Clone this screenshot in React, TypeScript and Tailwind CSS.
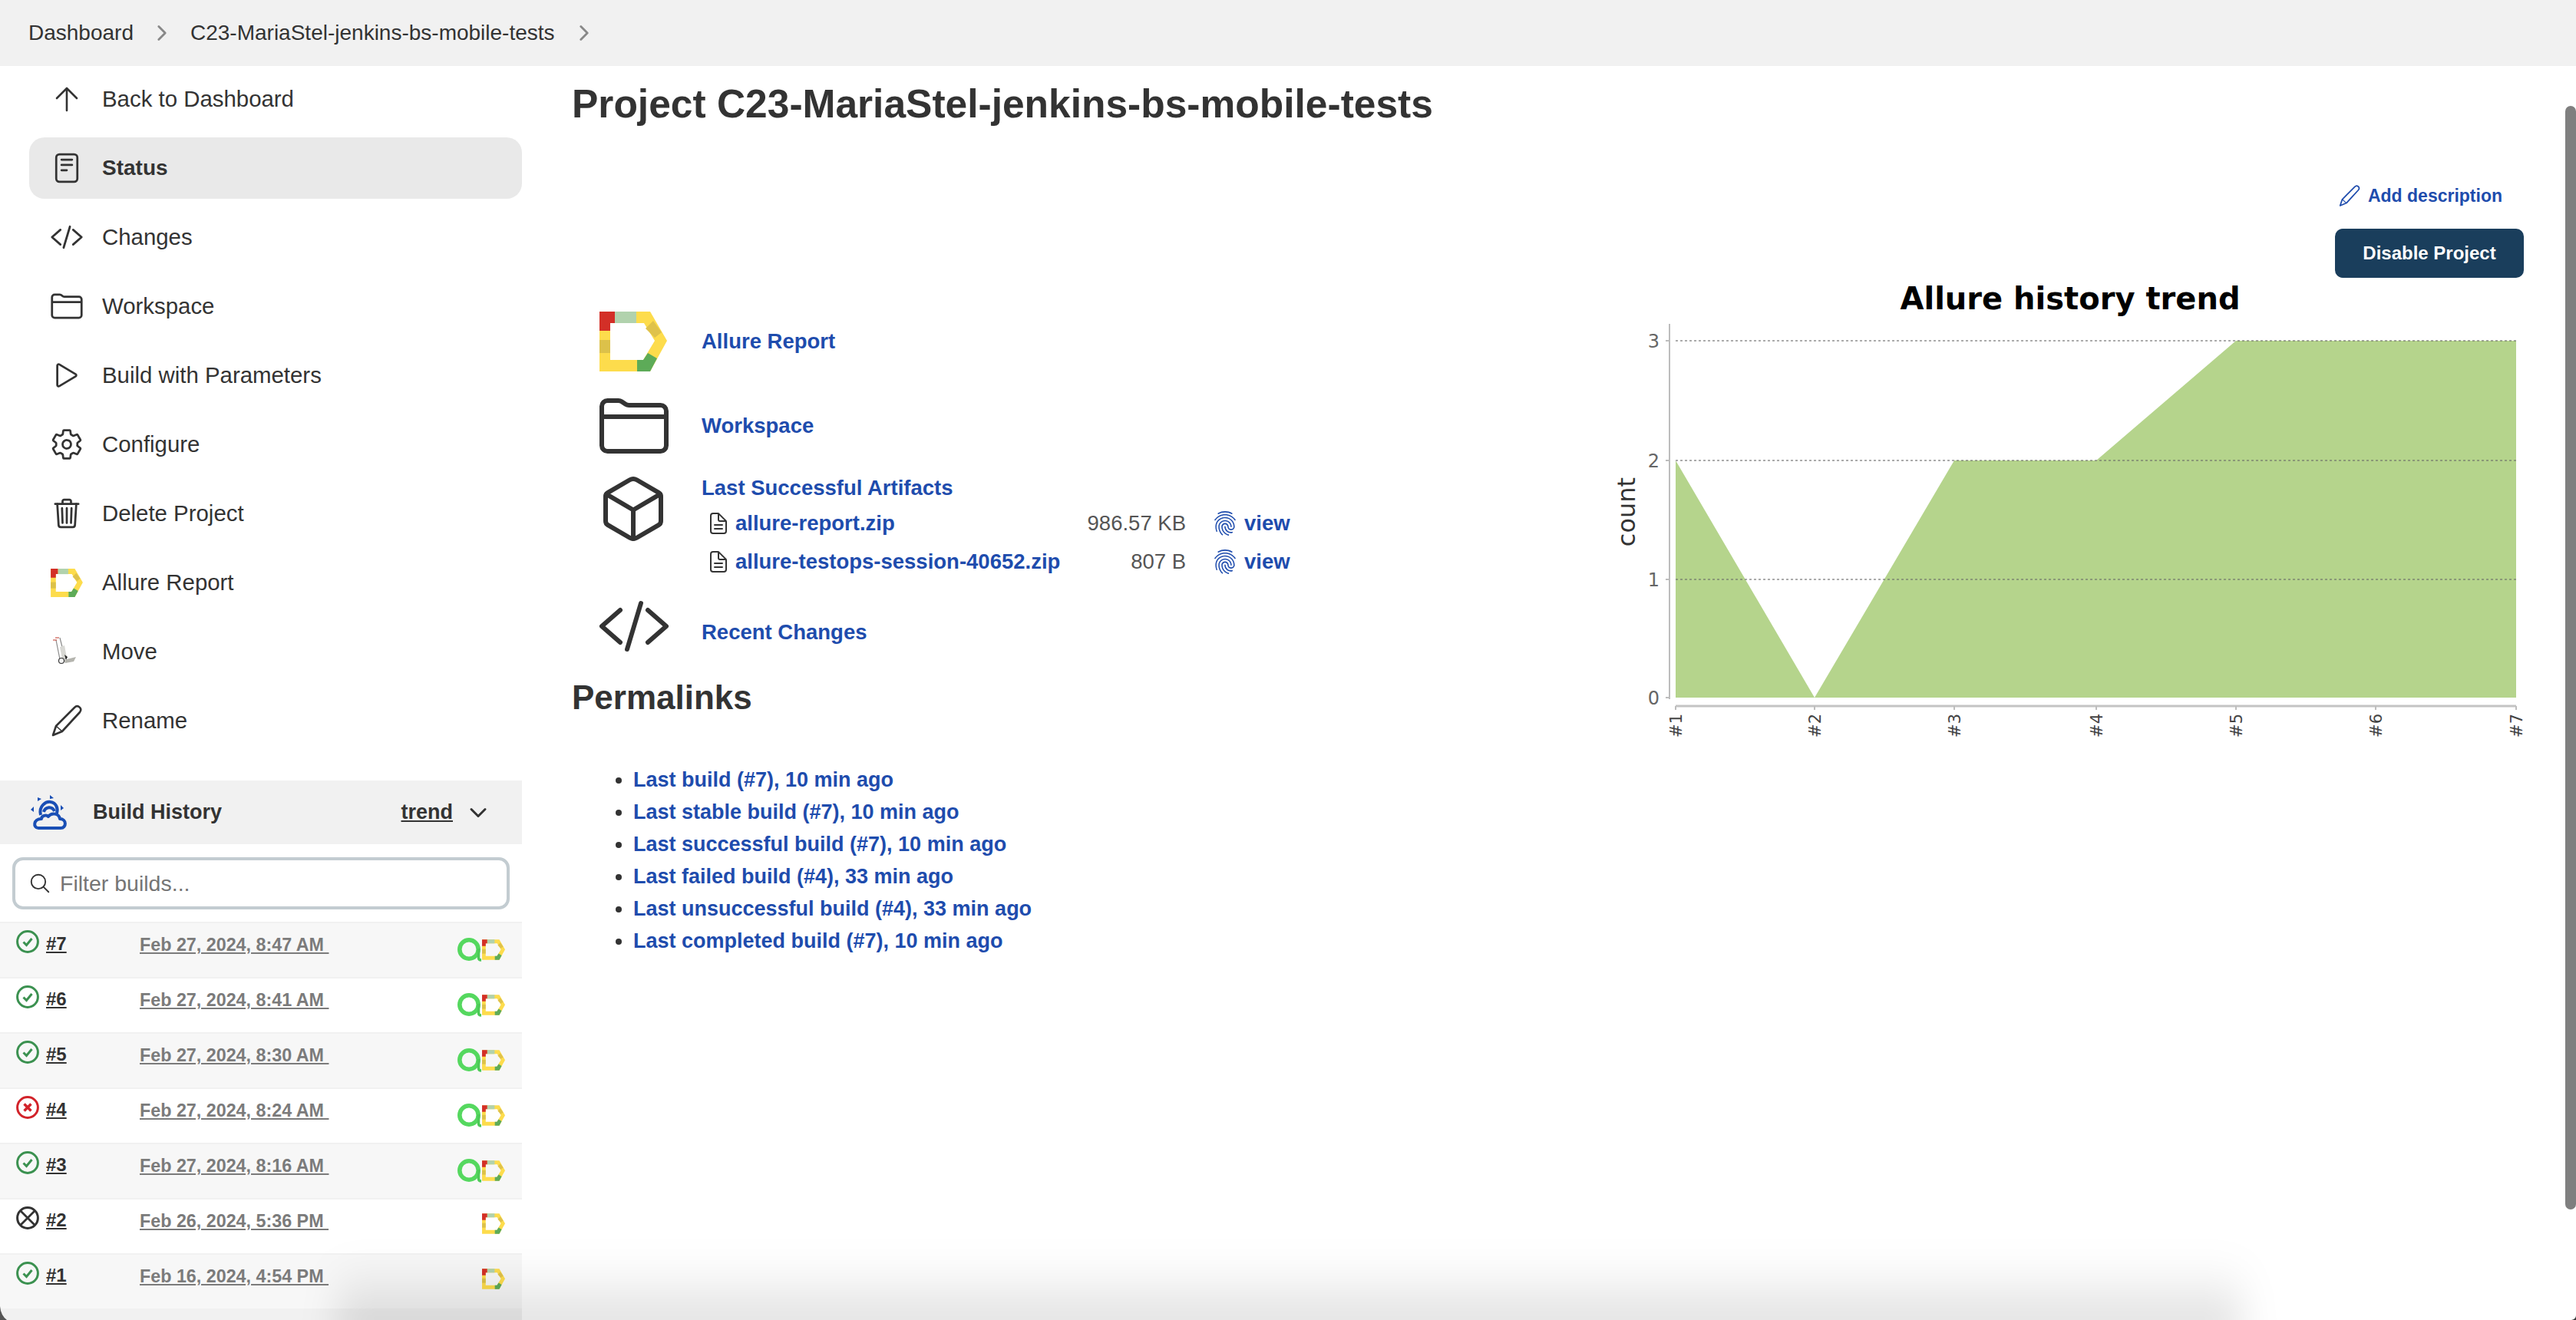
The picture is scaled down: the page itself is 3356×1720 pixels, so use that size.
import {
  IoChevronDownOutline,
  IoChevronForwardOutline,
  IoCodeSlashOutline,
  IoCubeOutline,
  IoDocumentTextOutline,
  IoFingerPrintOutline,
  IoFolderOutline,
  IoPlayOutline,
  IoReaderOutline,
  IoSearchOutline,
  IoSettingsOutline,
  IoTrashOutline,
} from "react-icons/io5";

// Allure "D" logo
function AllureLogo({ className }: { className: string }) {
  return (
    <svg viewBox="0 0 88 78" className={className}>
      <path fillRule="evenodd" fill="#fddc4c" d="M0 0H66L88 38L66 78H0ZM14 15V63H57L72 38L58 15Z" />
      <path fill="#d32f27" d="M0 0H20V15H14V25H0Z" />
      <path fill="#b1d2ad" d="M20 0H48V15H20Z" />
      <path fill="#dcc14a" d="M0 37H14V54H0Z" />
      <path fill="#dfc24b" d="M60 22L70 12L81 27L72 34Z" />
      <path fill="#5dab58" d="M49 63H57L63 54L75 61L66 78H49Z" />
    </svg>
  );
}

// Allure TestOps "a" badge
function TestOpsLogo() {
  return (
    <svg viewBox="0 0 32 32" className="w-[32px] h-[32px] shrink-0">
      <circle cx="15" cy="16" r="12.2" fill="none" stroke="#55d85f" strokeWidth="5.6" />
      <path d="M27.5 15V27Q27.5 30 31 30" fill="none" stroke="#4dc957" strokeWidth="3.5" />
    </svg>
  );
}

function HandTruck() {
  return (
    <svg viewBox="0 0 48 48" className="w-[48px] h-[48px] shrink-0 -mx-[2px]">
      <path d="M15 6L22 34M10 9L15 34" stroke="#8a8a8a" strokeWidth="1.2" fill="none" />
      <path d="M9 6H14M6 9H11" stroke="#c0392b" strokeWidth="1.2" fill="none" />
      <path d="M15 18L21 16L24 32L18 34Z" fill="#d8d8d4" />
      <path d="M21 28L25 31L23 35Z" fill="#222" />
      <path d="M20 35L36 31L33 37L22 39Z" fill="#b4b4ae" />
      <circle cx="17" cy="36" r="3.5" fill="#f2f2f2" stroke="#333" strokeWidth="1.1" />
    </svg>
  );
}

function ArrowUpIcon() {
  return (
    <svg viewBox="0 0 44 44" className="w-[44px] h-[44px] shrink-0" fill="none" stroke="#333" strokeWidth="2.6" strokeLinecap="round" strokeLinejoin="round">
      <path d="M22 8V37M9 21L22 8L35 21" />
    </svg>
  );
}

function PencilIcon({ className }: { className: string }) {
  return (
    <svg viewBox="0 0 44 44" className={className} fill="none" stroke="currentColor" strokeWidth="2.6" strokeLinejoin="round">
      <path d="M4 41L8 29L32 5Q35 2 38 4Q42 7 39 11L16 36Z" />
      <path d="M8 29L16 36" strokeWidth="1.6" />
    </svg>
  );
}

function WeatherIcon() {
  return (
    <svg viewBox="0 0 48 46" className="w-[48px] h-[46px] shrink-0" fill="none" stroke="#1a4fb5" strokeWidth="4">
      <path d="M10 43H39C47 43 47 31 38 31C37 24 27 22 23 28C20 25 14 27 14 31C3 31 3 43 10 43Z" strokeLinejoin="round" />
      <path d="M13 26C10 14 20 8 26 9C33 10 36 17 34 24" />
      <path d="M17 22C19 15 28 14 31 21" />
      <path d="M9 3L14 5L9 8Z M25 0L30 4L25 5Z M0 19L4 15V22Z M39 13L43 17L39 20Z" fill="#1a4fb5" stroke="none" />
    </svg>
  );
}

function BuildStatus({ kind }: { kind: "ok" | "failed" | "aborted" }) {
  const color = kind === "ok" ? "#3b9150" : kind === "failed" ? "#d2232a" : "#333333";
  return (
    <svg viewBox="0 0 30 30" className="w-[30px] h-[30px] shrink-0" fill="none">
      <circle cx="15" cy="15" r="13.4" stroke={color} strokeWidth="3" />
      {kind === "ok" && <path d="M9.5 15.5L13.5 19.5L20.5 11" stroke={color} strokeWidth="3" />}
      {kind === "failed" && <path d="M10.5 10.5L19.5 19.5M19.5 10.5L10.5 19.5" stroke={color} strokeWidth="3.4" />}
      {kind === "aborted" && <path d="M5.5 5.5L24.5 24.5M24.5 5.5L5.5 24.5" stroke={color} strokeWidth="2.8" />}
    </svg>
  );
}

const navItems = [
  { label: "Back to Dashboard", icon: <ArrowUpIcon /> },
  { label: "Status", icon: <IoReaderOutline className="w-[44px] h-[44px] shrink-0" />, active: true },
  { label: "Changes", icon: <IoCodeSlashOutline className="w-[44px] h-[44px] shrink-0" /> },
  { label: "Workspace", icon: <IoFolderOutline className="w-[44px] h-[44px] shrink-0" /> },
  { label: "Build with Parameters", icon: <IoPlayOutline className="w-[44px] h-[44px] shrink-0" /> },
  { label: "Configure", icon: <IoSettingsOutline className="w-[44px] h-[44px] shrink-0" /> },
  { label: "Delete Project", icon: <IoTrashOutline className="w-[44px] h-[44px] shrink-0" /> },
  {
    label: "Allure Report",
    icon: (
      <div className="w-[44px] h-[44px] shrink-0 flex items-center justify-center">
        <AllureLogo className="w-[42px] h-[37px]" />
      </div>
    ),
  },
  { label: "Move", icon: <HandTruck /> },
  { label: "Rename", icon: <PencilIcon className="w-[44px] h-[44px] shrink-0 text-[#333]" /> },
];

const builds: { id: string; date: string; kind: "ok" | "failed" | "aborted"; ops: boolean; alt: boolean }[] = [
  { id: "#7", date: "Feb 27, 2024, 8:47 AM", kind: "ok", ops: true, alt: true },
  { id: "#6", date: "Feb 27, 2024, 8:41 AM", kind: "ok", ops: true, alt: false },
  { id: "#5", date: "Feb 27, 2024, 8:30 AM", kind: "ok", ops: true, alt: true },
  { id: "#4", date: "Feb 27, 2024, 8:24 AM", kind: "failed", ops: true, alt: false },
  { id: "#3", date: "Feb 27, 2024, 8:16 AM", kind: "ok", ops: true, alt: true },
  { id: "#2", date: "Feb 26, 2024, 5:36 PM", kind: "aborted", ops: false, alt: false },
  { id: "#1", date: "Feb 16, 2024, 4:54 PM", kind: "ok", ops: false, alt: true },
];

const artifacts = [
  { name: "allure-report.zip", size: "986.57 KB" },
  { name: "allure-testops-session-40652.zip", size: "807 B" },
];

const permalinks = [
  "Last build (#7), 10 min ago",
  "Last stable build (#7), 10 min ago",
  "Last successful build (#7), 10 min ago",
  "Last failed build (#4), 33 min ago",
  "Last unsuccessful build (#4), 33 min ago",
  "Last completed build (#7), 10 min ago",
];

// Trend graph: coordinates follow the picture of the Jenkins plugin
const tickX = [143, 324, 506, 691, 873, 1055, 1238];
const tickY = [
  { label: "3", y: 82 },
  { label: "2", y: 238 },
  { label: "1", y: 393 },
  { label: "0", y: 547 },
];

function TrendChart() {
  return (
    <svg viewBox="0 0 1260 600" className="w-[1260px] h-[600px] shrink-0">
      <text
        x="657"
        y="41"
        textAnchor="middle"
        fontFamily="DejaVu Sans, sans-serif"
        fontWeight="700"
        fontSize="40"
        fill="#000"
      >
        Allure history trend
      </text>
      <path d="M143 238L324 547L506 238L691 238L873 82H1238V547H143Z" fill="#b5d48c" />
      {tickY.slice(0, 3).map((t) => (
        <line key={t.label} x1="143" x2="1238" y1={t.y} y2={t.y} stroke="#666" strokeOpacity="0.55" strokeWidth="2" strokeDasharray="3 3" />
      ))}
      <path d="M135 60V549M130 82H135M130 238H135M130 393H135M130 547H135" stroke="#bdbdbd" strokeWidth="2" fill="none" />
      <path d="M143 558H1238" stroke="#c4c4c4" strokeWidth="3" fill="none" />
      {tickX.map((x) => (
        <line key={x} x1={x} x2={x} y1="558" y2="563" stroke="#bdbdbd" strokeWidth="2" />
      ))}
      {tickY.map((t) => (
        <text key={t.label} x="122" y={t.y + 9} textAnchor="end" fontFamily="DejaVu Sans, sans-serif" fontSize="24" fill="#666">
          {t.label}
        </text>
      ))}
      {tickX.map((x, i) => (
        <text
          key={x}
          transform={`translate(${x + 8} 568) rotate(-90)`}
          textAnchor="end"
          fontFamily="DejaVu Sans, sans-serif"
          fontSize="21"
          fill="#444"
        >
          {`#${i + 1}`}
        </text>
      ))}
      <text
        transform="translate(90 305) rotate(-90)"
        textAnchor="middle"
        fontFamily="DejaVu Sans, sans-serif"
        fontSize="32"
        fill="#333"
      >
        count
      </text>
    </svg>
  );
}

export default function App() {
  return (
    <div className="relative h-[1720px] overflow-hidden bg-white text-[#333] font-['Liberation_Sans',Arial,sans-serif]">
      {/* Breadcrumb bar */}
      <header className="h-[86px] bg-[#f1f1f1] flex items-center pl-[37px] text-[28px]">
        <span>Dashboard</span>
        <IoChevronForwardOutline className="w-[30px] h-[30px] text-[#888] mx-[22px]" />
        <span>C23-MariaStel-jenkins-bs-mobile-tests</span>
        <IoChevronForwardOutline className="w-[30px] h-[30px] text-[#888] ml-[23px]" />
      </header>

      <div className="flex">
        <aside className="w-[680px] shrink-0">
          <nav className="pt-[3px] pl-[38px] flex flex-col gap-[10px]">
            {navItems.map((item) => (
              <div
                key={item.label}
                className={`h-[80px] flex items-center pl-[27px] gap-[24px] rounded-[20px] ${
                  item.active ? "bg-[#e9e9e9] font-bold text-[28px]" : "text-[29.4px]"
                }`}
              >
                {item.icon}
                <span>{item.label}</span>
              </div>
            ))}
          </nav>

          {/* Build history */}
          <section className="mt-[38px]">
            <div className="h-[83px] bg-[#f1f1f1] flex items-center pl-[40px]">
              <WeatherIcon />
              <span className="ml-[33px] text-[27px] font-bold">Build History</span>
              <span className="ml-auto text-[27px] font-bold underline">trend</span>
              <IoChevronDownOutline className="w-[32px] h-[32px] ml-[17px] mr-[41px]" />
            </div>
            <div className="pt-[17px] pb-[16px] px-[16px]">
              <div className="h-[68px] border-[4px] border-[#c3ccd1] rounded-[14px] flex items-center pl-[17px]">
                <IoSearchOutline className="w-[30px] h-[30px]" />
                <span className="ml-[11px] text-[28.5px] text-[#757575]">Filter builds...</span>
              </div>
            </div>
            {builds.map((b) => (
              <div
                key={b.id}
                className={`h-[72px] border-t-2 border-[#f1f1f1] flex items-start pl-[21px] pr-[22px] ${
                  b.alt ? "bg-[#f7f7f7]" : "bg-white"
                }`}
              >
                <div className="mt-[9px]">
                  <BuildStatus kind={b.kind} />
                </div>
                <span className="ml-[9px] w-[122px] mt-[13px] text-[24px] leading-[28px] font-bold underline">{b.id}</span>
                <span className="mt-[14px] text-[23.3px] leading-[28px] font-bold text-[#7b7b7b] underline whitespace-pre">
                  {b.date + " "}
                </span>
                <div className="ml-auto mt-[18px] flex items-center">
                  {b.ops && <TestOpsLogo />}
                  <AllureLogo className="w-[30px] h-[27px]" />
                </div>
              </div>
            ))}
            <div className="h-[20px] bg-[#f1f1f1]" />
          </section>
        </aside>

        <main className="flex-1 flex min-w-0">
          {/* Project summary */}
          <div className="w-[1360px] shrink-0 pl-[65px]">
            <h1 className="pt-[19px] h-[79px] text-[51.5px] leading-[60px] font-bold">
              Project C23-MariaStel-jenkins-bs-mobile-tests
            </h1>
            <div className="mt-[230px] ml-[30px] text-[27.5px] font-bold text-[#1e4cad]">
              <div className="h-[100px] flex items-center">
                <div className="w-[100px] flex justify-center">
                  <AllureLogo className="w-[88px] h-[78px]" />
                </div>
                <a className="ml-[39px]">Allure Report</a>
              </div>
              <div className="mt-[5px] h-[110px] flex items-center">
                <IoFolderOutline className="w-[96px] h-[96px] ml-[3px] mr-[1px] text-[#333] shrink-0" />
                <a className="ml-[39px]">Workspace</a>
              </div>
              <div className="mt-[5px] h-[157px] flex items-start">
                <IoCubeOutline className="w-[96px] h-[96px] mx-[2px] text-[#333] shrink-0" />
                <div className="ml-[39px] pt-[4px]">
                  <a className="block leading-[34px]">Last Successful Artifacts</a>
                  {artifacts.map((a, i) => (
                    <div
                      key={a.name}
                      className={`grid grid-cols-[44px_587px_76px_auto] items-center h-[50px] ${i === 0 ? "mt-[4px]" : ""}`}
                    >
                      <IoDocumentTextOutline className="w-[32px] h-[32px] ml-[6px] text-[#333]" />
                      <div className="flex justify-between">
                        <a>{a.name}</a>
                        <span className="font-normal text-[#555]">{a.size}</span>
                      </div>
                      <IoFingerPrintOutline className="w-[34px] h-[34px] ml-[34px]" />
                      <a>view</a>
                    </div>
                  ))}
                </div>
              </div>
              <div className="h-[100px] flex items-center">
                <IoCodeSlashOutline className="w-[96px] h-[96px] ml-[3px] mr-[1px] mt-[-12px] text-[#333] shrink-0" />
                <a className="ml-[39px] mt-[4px]">Recent Changes</a>
              </div>
            </div>

            <h2 className="mt-[12px] text-[44px] leading-[50px] font-bold">Permalinks</h2>
            <ul className="mt-[61px] pl-[80px] list-disc marker:text-[#333] text-[27px] leading-[42px] font-bold text-[#1e4cad]">
              {permalinks.map((p) => (
                <li key={p}>
                  <a>{p}</a>
                </li>
              ))}
            </ul>
          </div>

          {/* Right column: actions and trend graph */}
          <div className="w-[1260px] shrink-0 pt-[154px] flex flex-col items-end">
            <div className="h-[30px] flex items-center mr-[40px] text-[23px] font-bold text-[#1e4cad]">
              <PencilIcon className="w-[30px] h-[30px] mr-[9px]" />
              <a>Add description</a>
            </div>
            <button className="mt-[28px] mr-[12px] w-[246px] h-[64px] rounded-[10px] bg-[#1a3e5c] text-white text-[24px] font-bold">
              Disable Project
            </button>
            <TrendChart />
          </div>
        </main>
      </div>

      {/* macOS scrollbar, window shadow and rounded window corners */}
      <div className="absolute right-0 top-[138px] w-[14px] h-[1438px] rounded-full bg-[#7f7f7f]" />
      <div className="absolute left-[440px] bottom-[-30px] w-[2480px] h-[110px] bg-gradient-to-t from-black/15 to-transparent blur-xl pointer-events-none" />
      <svg viewBox="0 0 10 18" className="absolute left-0 bottom-0 w-[10px] h-[18px]">
        <path d="M0 0Q1 12 9 18H0Z" fill="#555" />
      </svg>
      <svg viewBox="0 0 6 6" className="absolute right-0 bottom-0 w-[6px] h-[6px]">
        <path d="M6 0Q6 5 0 6H6Z" fill="#333" />
      </svg>
    </div>
  );
}
